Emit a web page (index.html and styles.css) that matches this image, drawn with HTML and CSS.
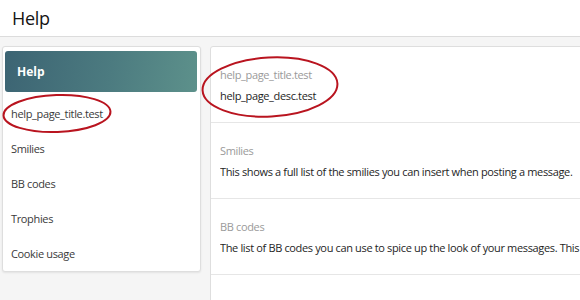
FILE: index.html
```html
<!DOCTYPE html>
<html>
<head>
<meta charset="utf-8">
<link rel="stylesheet" href="styles.css">
</head>
<body>
<div class="page">
  <header class="page-header"><h1 class="page-title">Help</h1></header>
  <div class="main">
    <nav class="sidebar">
      <div class="sidebar-head">Help</div>
      <ul class="side-list">
        <li class="side-item">help_page_title.test</li>
        <li class="side-item">Smilies</li>
        <li class="side-item">BB codes</li>
        <li class="side-item">Trophies</li>
        <li class="side-item">Cookie usage</li>
      </ul>
    </nav>
    <section class="content">
      <div class="row">
        <div class="row-title">help_page_title.test</div>
        <div class="row-desc">help_page_desc.test</div>
      </div>
      <div class="row">
        <div class="row-title">Smilies</div>
        <div class="row-desc">This shows a full list of the smilies you can insert when posting a message.</div>
      </div>
      <div class="row">
        <div class="row-title">BB codes</div>
        <div class="row-desc">The list of BB codes you can use to spice up the look of your messages. This</div>
      </div>
    </section>
  </div>
  <svg class="marks" width="580" height="300" viewBox="0 0 580 300">
    <ellipse cx="57" cy="113.5" rx="53.5" ry="18.5" transform="rotate(-2 57 113.5)"/>
    <ellipse cx="270" cy="87" rx="67.5" ry="29.5" transform="rotate(-3 270 87)"/>
  </svg>
</div>
</body>
</html>
```
FILE: styles.css
```css
html, body {
  margin: 0;
  padding: 0;
  background: #f5f5f5;
  overflow: hidden;
}
.page {
  position: relative;
  width: 580px;
  height: 300px;
  overflow: hidden;
  font-family: "Open Sans", "Noto Sans", sans-serif;
  color: #222;
}
.page-header {
  height: 37px;
  background: #fff;
  border-bottom: 1px solid #dcdcdc;
  padding-left: 12px;
  box-sizing: border-box;
  display: flex;
  align-items: center;
}
.page-title {
  margin: 0;
  font-size: 18px;
  font-weight: 400;
  letter-spacing: -0.3px;
  line-height: 24px;
  color: #141414;
}
.main {
  display: flex;
  align-items: flex-start;
  gap: 9px;
  padding: 9px 0 0 2px;
  width: 640px;
}
.sidebar {
  flex: 0 0 199px;
  box-sizing: border-box;
  background: #fff;
  border: 1px solid #dedede;
  border-radius: 3px;
  box-shadow: 0 1px 2px rgba(0,0,0,0.08);
  padding: 4px 3px 0 2px;
}
.sidebar-head {
  height: 41px;
  border-radius: 3px;
  background: linear-gradient(100deg, #3c6473 0%, #4c7b80 55%, #5d918b 100%);
  color: #fff;
  font-weight: 700;
  font-size: 12px;
  line-height: 41px;
  padding-left: 12px;
}
.side-list {
  list-style: none;
  margin: 0;
  padding: 4px 0 0 0;
}
.side-item {
  height: 35px;
  line-height: 35px;
  padding-left: 6px;
  font-size: 11px;
  letter-spacing: -0.35px;
  color: #3a3a3a;
}
.content {
  flex: 1 1 auto;
  min-width: 0;
  background: #fff;
  border: 1px solid #dedede;
  border-radius: 3px;
  height: 260px;
}
.row {
  padding: 19px 9px 19px;
  border-bottom: 1px solid #e6e6e6;
  height: 76px;
  box-sizing: border-box;
}
.row-title {
  font-size: 11px;
  letter-spacing: -0.35px;
  line-height: 18px;
  color: #9a9a9a;
}
.row-desc {
  margin-top: 3px;
  font-size: 11px;
  letter-spacing: -0.35px;
  line-height: 18px;
  color: #1e1e1e;
  white-space: nowrap;
  overflow: hidden;
}
.marks {
  position: absolute;
  left: 0;
  top: 0;
  pointer-events: none;
}
.marks ellipse {
  fill: none;
  stroke: #b9141f;
  stroke-width: 2;
}
```
